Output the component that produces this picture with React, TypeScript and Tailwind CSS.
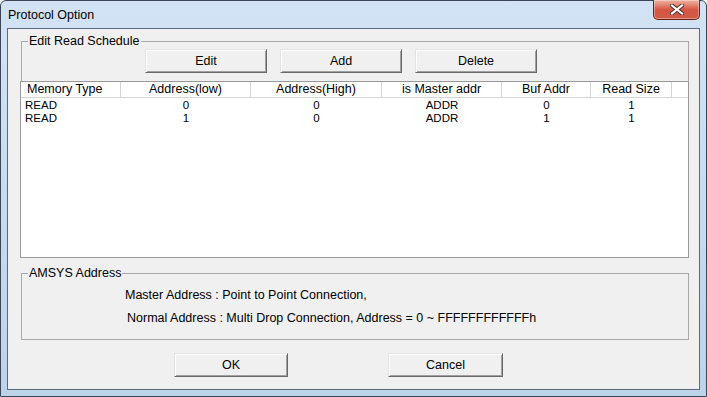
import { ReactNode } from "react";

const columns = [
  { label: "Memory Type", left: true },
  { label: "Address(low)" },
  { label: "Address(High)" },
  { label: "is Master addr" },
  { label: "Buf Addr" },
  { label: "Read Size" },
];

const rows = [
  ["READ", "0", "0", "ADDR", "0", "1"],
  ["READ", "1", "0", "ADDR", "1", "1"],
];

const grid = "grid grid-cols-[100px_130px_131px_120px_89px_81px_1fr]";

function Button({ children, className = "" }: { children: ReactNode; className?: string }) {
  return (
    <button className={`h-[24px] border border-t-[#e3e3e3] border-l-[#e3e3e3] border-r-[#696969] border-b-[#696969] bg-[#f0f0f0] text-center leading-[20px] text-black shadow-[inset_1px_1px_0_#ffffff,inset_-1px_-1px_0_#a0a0a0] ${className}`}>
      {children}
    </button>
  );
}

function CloseButton() {
  return (
    <div className="-mt-px flex h-[20px] w-[47px] items-center justify-center rounded-b-[5px] border border-t-0 border-[#6b2318] bg-gradient-to-b from-[#eeb3a4] via-[#d45844] to-[#cf5a45] shadow-[inset_0_0_0_1px_rgba(255,255,255,0.35)]">
      <svg width="14" height="11" viewBox="0 0 14 11">
        <path d="M2 1.5 L12 9.5 M12 1.5 L2 9.5" stroke="#4a2a24" strokeWidth="4" strokeLinecap="square" />
        <path d="M2 1.5 L12 9.5 M12 1.5 L2 9.5" stroke="#ffffff" strokeWidth="2.2" strokeLinecap="square" />
      </svg>
    </div>
  );
}

export default function App() {
  return (
    <div className="h-[397px] w-[707px] bg-white font-['Liberation_Sans',Arial,sans-serif] text-[12.5px] text-black">
      <div className="flex h-full flex-col rounded-t-[6px] border border-[#3b4756] bg-gradient-to-b from-[#d3e3f5] to-[#bcd3ec] px-[6px] pb-[6px]">
        <div className="flex h-[27px] items-start justify-between">
          <span className="pl-[1px] pt-[7px] leading-[15px]">Protocol Option</span>
          <CloseButton />
        </div>

        <div className="flex flex-1 flex-col border border-[#5b6b7e] bg-[#f0f0f0]">
          <fieldset className="ml-[13px] mr-[10px] mt-[5px] border border-b-0 border-[#a9a9a9] pb-[8px]">
            <legend className="ml-[6px] px-[1px] leading-[14px]">Edit Read Schedule</legend>
            <div className="mt-[1px] flex gap-[13px] pl-[123px]">
              <Button className="w-[122px]">Edit</Button>
              <Button className="w-[122px]">Add</Button>
              <Button className="w-[122px]">Delete</Button>
            </div>
          </fieldset>

          <div className="ml-[12px] mr-[10px] h-[177px] border border-[#999999] bg-white">
            <div className={`${grid} h-[16px] border-b border-[#d5d5d5] leading-[15px]`}>
              {columns.map((c) => (
                <div key={c.label} className={`border-r border-[#d5d5d5] ${c.left ? "pl-[6px] text-left" : "text-center"}`}>
                  {c.label}
                </div>
              ))}
              <div />
            </div>
            <div className="pt-[1px] text-[11.5px]">
              {rows.map((r, i) => (
                <div key={i} className={`${grid} h-[13px] leading-[13px]`}>
                  {r.map((v, j) => (
                    <div key={j} className={j === 0 ? "pl-[4px] text-left" : "text-center"}>
                      {v}
                    </div>
                  ))}
                </div>
              ))}
            </div>
          </div>

          <fieldset className="ml-[13px] mr-[10px] mt-[8px] border border-[#a9a9a9] pb-[14px]">
            <legend className="ml-[6px] px-[1px] leading-[14px]">AMSYS Address</legend>
            <p className="mt-[8px] pl-[103px] leading-[14px]">Master Address : Point to Point Connection,</p>
            <p className="mt-[9px] pl-[105px] leading-[14px]">Normal Address : Multi Drop Connection, Address = 0 ~ FFFFFFFFFFFFh</p>
          </fieldset>

          <div className="ml-[166px] mt-[13px] flex gap-[100px]">
            <Button className="w-[114px]">OK</Button>
            <Button className="w-[115px]">Cancel</Button>
          </div>
        </div>
      </div>
    </div>
  );
}
